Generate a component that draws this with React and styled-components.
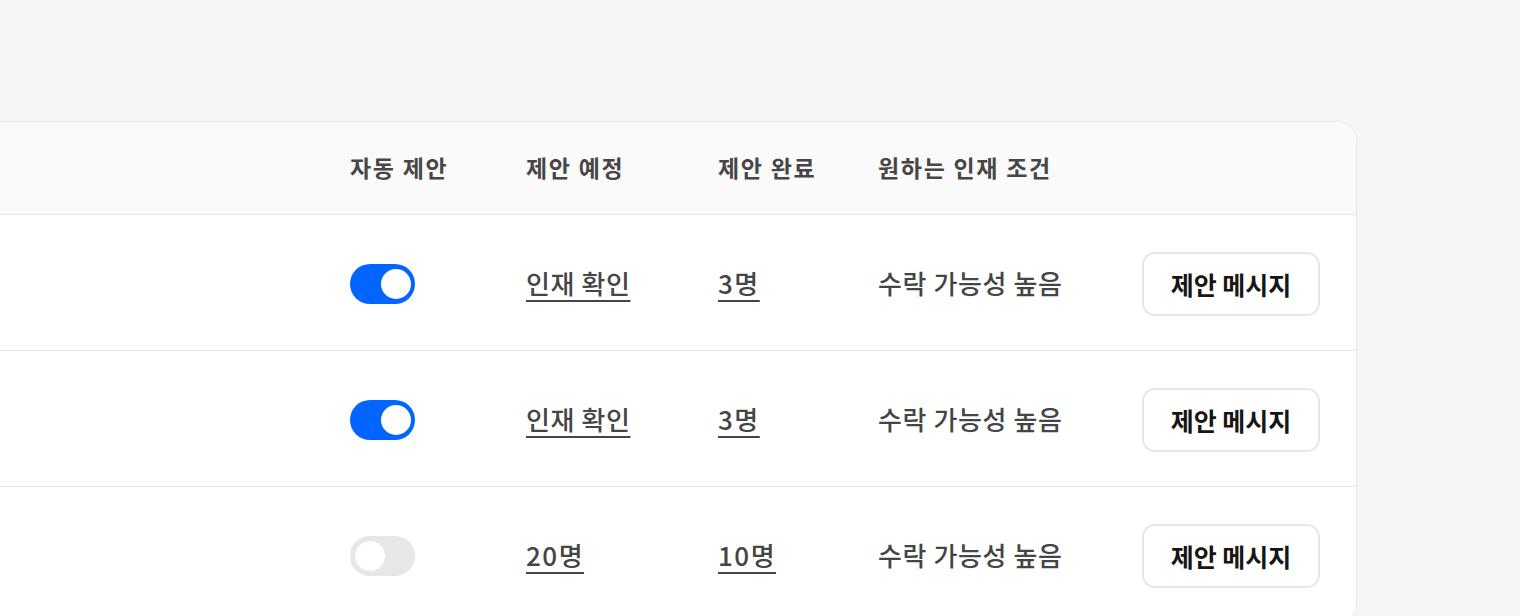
import React from "react";
import styled, { createGlobalStyle } from "styled-components";

const Global = createGlobalStyle`
  html, body { margin: 0; padding: 0; background: #f6f6f6; overflow: hidden; }
  body { font-family: "Noto Sans CJK KR", "Noto Sans", sans-serif; }
`;

const Page = styled.div`
  width: 1520px;
  height: 616px;
  padding-top: 121px;
  box-sizing: border-box;
  overflow: hidden;
`;

const Card = styled.div`
  margin-left: -20px;
  width: 1377px;
  box-sizing: border-box;
  background: #ffffff;
  border: 1px solid #e8e8e8;
  border-radius: 20px;
  overflow: hidden;
`;

const Row = styled.div`
  display: grid;
  grid-template-columns: 1fr 176px 192px 160px 264px 178px;
  padding-right: 36px;
  align-items: center;
  height: ${(p) => (p.$header ? "92px" : "135px")};
  background: ${(p) => (p.$header ? "#fafafa" : "#ffffff")};
  border-bottom: 1px solid #e6e6e6;
`;

const HeadCell = styled.div`
  font-size: 23px;
  font-weight: 600;
  color: #464646;
  letter-spacing: 1.7px;
  white-space: nowrap;
  margin-top: -3px;
`;

const Cell = styled.div`
  display: flex;
  align-items: center;
  font-size: 26px;
  font-weight: 500;
  color: #454545;
  letter-spacing: 0.6px;
  white-space: nowrap;
`;

const LinkText = styled.span`
  text-decoration: underline;
  text-decoration-thickness: 2px;
  text-underline-offset: 6px;
  color: #454545;
  letter-spacing: ${(p) => (p.$numeric ? "1.5px" : "0.6px")};
  cursor: pointer;
`;

const Toggle = styled.div`
  position: relative;
  width: 65px;
  height: 40px;
  border-radius: 20px;
  background: ${(p) => (p.$on ? "#0066ff" : "#e6e7e9")};
  margin-top: 3px;
`;

const Knob = styled.div`
  position: absolute;
  top: 5px;
  ${(p) => (p.$on ? "right: 4px;" : "left: 5px;")}
  width: 30px;
  height: 30px;
  border-radius: 50%;
  background: #ffffff;
`;

const Button = styled.button`
  width: 178px;
  height: 64px;
  box-sizing: border-box;
  border: 2px solid #e6e6e6;
  border-radius: 13px;
  background: #ffffff;
  font-family: inherit;
  font-size: 25px;
  font-weight: 600;
  color: #161616;
  letter-spacing: 0;
  padding: 0;
  cursor: pointer;
  margin-top: 2px;
`;

const rows = [
  { on: true, planned: "인재 확인", plannedNum: false, done: "3명" },
  { on: true, planned: "인재 확인", plannedNum: false, done: "3명" },
  { on: false, planned: "20명", plannedNum: true, done: "10명" },
];

export default function App() {
  return (
    <Page>
      <Global />
      <Card>
        <Row $header>
          <div />
          <HeadCell>자동 제안</HeadCell>
          <HeadCell>제안 예정</HeadCell>
          <HeadCell>제안 완료</HeadCell>
          <HeadCell>원하는 인재 조건</HeadCell>
          <div />
        </Row>
        {rows.map((r, i) => (
          <Row key={i}>
            <div />
            <Cell>
              <Toggle $on={r.on}>
                <Knob $on={r.on} />
              </Toggle>
            </Cell>
            <Cell>
              <LinkText $numeric={r.plannedNum}>{r.planned}</LinkText>
            </Cell>
            <Cell>
              <LinkText $numeric>{r.done}</LinkText>
            </Cell>
            <Cell>수락 가능성 높음</Cell>
            <Cell>
              <Button>제안 메시지</Button>
            </Cell>
          </Row>
        ))}
      </Card>
    </Page>
  );
}
